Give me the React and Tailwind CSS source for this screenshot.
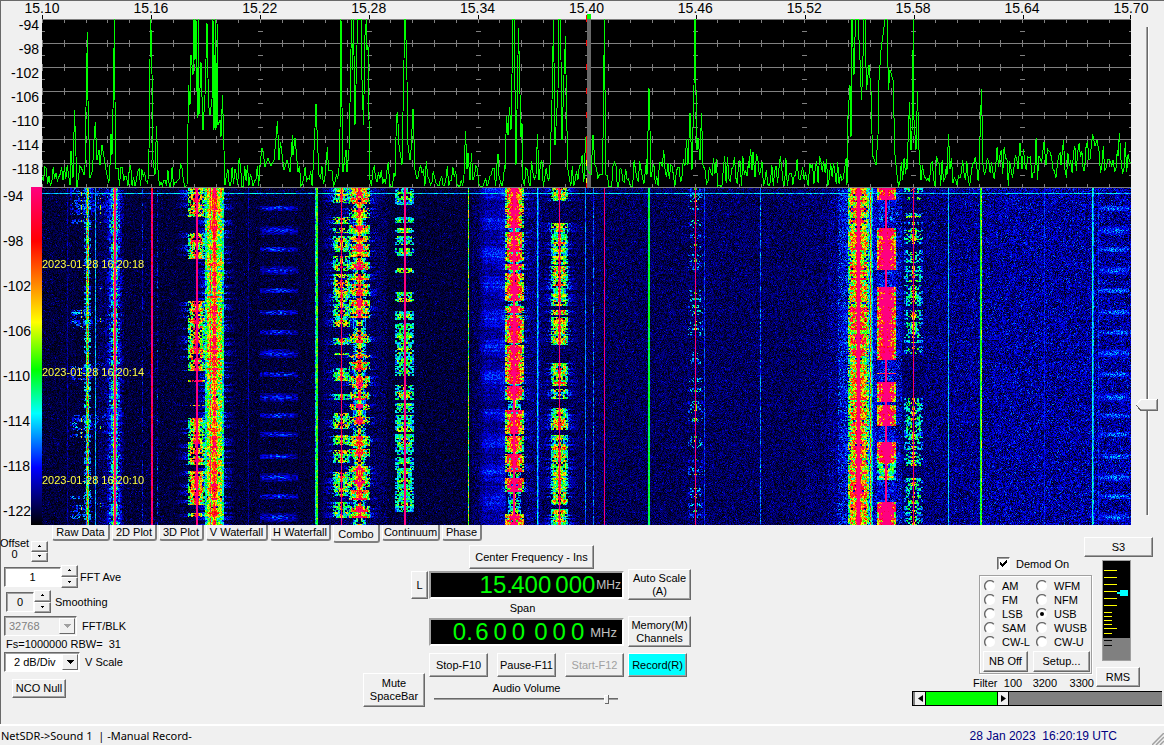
import React, { useLayoutEffect, useRef, useState } from 'react';
import clsx from 'clsx';

const PLOT_W = 1089;
const FALL_H = 337;

const FREQS = ['15.10', '15.16', '15.22', '15.28', '15.34', '15.40', '15.46', '15.52', '15.58', '15.64', '15.70'];
const SPECTRUM_DB = ['-94', '-98', '-102', '-106', '-110', '-114', '-118'];
const FALL_DB = ['-94', '-98', '-102', '-106', '-110', '-114', '-118', '-122'];
const TABS = [
  { name: 'Raw Data', width: 'w-[58px]' },
  { name: '2D Plot', width: 'w-[45px]' },
  { name: '3D Plot', width: 'w-[45px]' },
  { name: 'V Waterfall', width: 'w-[62px]' },
  { name: 'H Waterfall', width: 'w-[61px]' },
  { name: 'Combo', width: 'w-[47px]' },
  { name: 'Continuum', width: 'w-[58px]' },
  { name: 'Phase', width: 'w-[40px]' },
];
const MODES = ['AM', 'WFM', 'FM', 'NFM', 'LSB', 'USB', 'SAM', 'WUSB', 'CW-L', 'CW-U'];

// Repeatable pseudo random value in 0..1
const rnd = (a, b = 0, c = 0) => {
  let h = Math.imul(a + 101, 374761393) ^ Math.imul(b + 57, 668265263) ^ Math.imul(c + 11, 2147483647);
  h = Math.imul(h ^ (h >>> 13), 1274126177);
  h = Math.imul(h ^ (h >>> 15), 2246822519);
  return ((h ^ (h >>> 16)) >>> 0) / 4294967296;
};

// Signal peaks, one list of x,y pairs per carrier
const PEAKS = [
  [28, 151, 29, 132, 31, 159, 32.5, 91, 35, 168],
  [43, 146, 44, 88, 45.4, 13, 46, 81, 48, 159],
  [51, 141, 52, 121, 53.3, 103, 55, 141, 57, 131, 58, 146, 60, 126, 62, 138, 64, 151],
  [68, 146, 69, 115, 70, 136, 71.5, 67, 72.4, 0, 73, 81, 74, 149, 76, 149],
  [106, 161, 107, 131, 108, 41, 108.4, 0, 109.6, 21, 110.5, 96, 111, 141, 113, 156, 114.5, 107, 116, 151],
  [145, 166, 146, 106, 146.6, 66, 148, 86, 149, 36, 151, 56, 152, 0, 153, 41, 154, 0, 155.4, 99, 156.6, 0, 157, 96, 159, 43, 161, 111, 163, 76, 165, 4, 166.5, 86, 168, 96, 170, 81, 171, 0, 172, 111, 173.5, 0, 174, 111, 175.6, 5, 176, 106, 178, 101, 179, 118, 180.5, 76, 182, 131, 183, 166],
  [218, 146, 220, 129, 221, 132, 223, 148, 226, 139, 229, 147, 232, 141, 235.5, 102, 237, 141, 238.5, 123, 242, 151, 245, 141, 248, 153, 250.5, 116, 251, 136, 253, 119, 256, 153],
  [271, 151, 272.5, 121, 274, 85, 275, 111, 277, 156],
  [284, 146, 285.4, 128, 286.5, 151, 290, 152],
  [297, 149, 298, 111, 299, 0, 300.5, 131, 301, 153, 304, 131, 305, 153, 307, 131, 308.5, 61, 309.5, 0, 310.5, 51, 311.5, 0, 313, 106, 315, 26, 316, 0, 319, 0, 320, 61, 321.5, 106, 323, 16, 324.5, 0, 325, 31, 326, 26, 327, 101, 328, 161],
  [353, 158, 354.5, 98, 355.5, 93, 357, 126, 360, 146, 362, 41, 362.5, 0, 363.5, 0, 365, 61, 366, 126, 368, 141, 369, 131, 371, 90, 373, 151],
  [422, 156, 423.5, 112, 425, 150, 426, 134, 428, 161, 429.5, 134, 431, 161],
  [455, 145, 456, 135, 457, 157],
  [463, 151, 464.5, 97, 466, 116, 467.5, 88, 469, 111, 471, 0, 472.5, 0, 473, 71, 474, 146, 476.5, 9, 479, 118, 480, 104, 481, 161],
  [494, 156, 495.5, 115, 497, 161],
  [508, 146, 510, 81, 511.5, 1, 513, 126, 516, 71, 517, 0, 518, 0, 519, 41, 520, 121, 522, 56, 523.5, 17, 524.5, 91, 526, 151],
  [542, 161, 543.6, 118, 545, 151, 549, 156, 551, 116, 553, 146],
  [560, 156, 561.5, 101, 562.3, 0, 563, 71, 564, 156],
  [605, 156, 607, 69, 608, 111, 609, 158],
  [643, 146, 644.5, 120, 646, 146, 648, 94, 650, 151, 652, 66, 652.7, 0, 653.3, 0, 654, 71, 655, 131, 656, 119, 658, 141, 659.5, 94, 661, 146, 663, 151],
  [707, 149, 708.6, 130, 710, 151, 711, 133, 713, 158],
  [805, 166, 806, 96, 808, 66, 809, 118, 810, 0, 812, 56, 813.5, 0, 816, 0, 818, 41, 819.5, 81, 820.5, 56, 822, 0, 823, 0, 824.5, 71, 827, 46, 829, 71, 830.5, 136, 834, 146, 836, 116, 837, 61, 839, 31, 843, 1, 845, 0, 846.5, 71, 848, 51, 851, 61, 853, 136, 855, 156],
  [865, 151, 867.5, 83, 869, 131, 870, 113, 871.4, 0, 872, 101, 874, 131, 875.5, 72, 877, 131, 879, 161],
  [905, 156, 906.5, 115, 908, 150],
  [937, 151, 939.5, 70, 941, 146],
  [976, 150, 978, 124, 980, 150],
  [1000, 140, 1002, 123, 1004, 146],
  [1019, 146, 1021.5, 121, 1023, 151],
  [1048, 140, 1050.5, 115, 1053, 127, 1055, 121, 1057, 132],
  [1076, 137, 1077.5, 114, 1079, 141],
];

const buildTrace = () => {
  const pts = [];
  let x = 0;
  let n = 0;
  const noiseTo = (end) => {
    while (x < end) {
      n += 1;
      const floor = x < 620 ? 174 : x < 935 ? 171 : 161 - (x - 935) * 0.08;
      const swing = x < 480 ? 28 : 34;
      let y = floor - rnd(n, 3) * swing;
      if (rnd(n, 9) > 0.9) y -= 13 * rnd(n, 5);
      if (x > 935) y += 6 + (rnd(n, 7) - 0.4) * 10;
      pts.push([x, Math.min(167, Math.round(y))]);
      x += 1.4;
    }
  };
  PEAKS.forEach((p) => {
    noiseTo(p[0]);
    for (let i = 0; i < p.length; i += 2) pts.push([p[i], p[i + 1]]);
    x = p[p.length - 2] + 1.5;
  });
  noiseTo(PLOT_W);
  return pts.map(([px, py]) => `${px.toFixed(1)},${py + 5}`).join(' ');
};
const TRACE = buildTrace();

// level -> colour, black at the bottom of the scale and magenta at the top
const PALETTE = [
  [0, 0, 0, 0], [0.17, 0, 0, 255], [0.33, 0, 255, 255], [0.46, 0, 255, 0],
  [0.6, 255, 255, 0], [0.72, 255, 128, 0], [0.84, 255, 0, 0], [1, 255, 0, 128],
];
const colour = (v) => {
  if (v <= 0) return [0, 0, 8];
  if (v >= 1) return [255, 0, 128];
  let i = 1;
  while (PALETTE[i][0] < v) i += 1;
  const a = PALETTE[i - 1];
  const b = PALETTE[i];
  const t = (v - a[0]) / (b[0] - a[0]);
  return [1, 2, 3].map((k) => a[k] + (b[k] - a[k]) * t);
};

// Steady carriers: x, width, level, flutter
const LINES = [
  [44, 1, 0.34, 0.3], [45, 1, 0.62, 0.5], [46, 1, 0.4, 0.3], [53, 1, 0.27, 0.12], [71, 1, 0.4, 0.5], [72, 2, 1.1, 0],
  [74, 1, 0.36, 0.4], [109, 2, 1, 0.3], [110, 1, 0.7, 0.5],
  [154, 2, 1.1, 0], [273, 1, 0.3, 0.2], [274, 2, 0.46, 0.14], [299, 1, 0.98, 0.2], [362, 2, 1.1, 0],
  [426, 1, 0.48, 0.3], [471, 2, 1.1, 0], [495, 1, 0.3, 0.12], [496, 1, 0.2, 0.1], [517, 1, 1, 0.1],
  [543, 1, 0.24, 0.1], [551, 1, 0.2, 0.16], [562, 1, 1.02, 0.15], [606, 2, 0.43, 0.05],
  [653, 1, 0.98, 0.1], [662, 1, 0.19, 0.12], [718, 1, 0.22, 0.16], [815, 3, 1.1, 0],
  [828, 2, 0.38, 0.16], [843, 2, 1.1, 0], [871, 1, 0.98, 0.1], [906, 1, 0.3, 0.1],
  [938, 1, 0.43, 0.1], [939, 1, 0.52, 0.16], [1002, 1, 0.16, 0.12], [1050, 1, 0.33, 0.1], [1051, 1, 0.25, 0.14],
  [1056, 1, 0.17, 0.14], [25, 1, 0.1, 0.1], [206, 1, 0.1, 0.1], [100, 1, 0.1, 0.2], [115, 1, 0.1, 0.25],
];

const ALL = [[0, 337]];
// Modulated stations: centre, half width, level, how full the sidebands are, core half width, keyed-on rows
const STATIONS = [
  { c: 39, hw: 11, lv: 0.27, fill: 0.55, core: 0, on: [[0, 27], [31, 36], [122, 140], [177, 192], [227, 250], [308, 311], [317, 331]] },
  { c: 58, hw: 9, lv: 0.23, fill: 0.45, core: 0, on: [[0, 27], [32, 35], [98, 101], [130, 136], [175, 184], [226, 244], [315, 319]] },
  { c: 45, hw: 3, lv: 0.4, fill: 0.6, core: 0, on: ALL },
  { c: 72, hw: 9, lv: 0.17, fill: 0.6, core: 1, on: ALL },
  { c: 72, hw: 5, lv: 0.34, fill: 0.7, core: 1, on: ALL },
  { c: 109, hw: 8, lv: 0.18, fill: 0.22, core: 0, on: ALL },
  { c: 154, hw: 8, lv: 0.66, fill: 0.85, core: 2, on: [[0, 29], [45, 71], [113, 183], [192, 194], [217, 218], [230, 277], [283, 317], [325, 329]] },
  { c: 172, hw: 9, lv: 0.56, fill: 0.99, core: 2, on: ALL },
  { c: 168, hw: 2, lv: 0.7, fill: 0.8, core: 0, on: ALL },
  { c: 299, hw: 8, lv: 0.52, fill: 0.8, core: 1, on: [[0, 15], [29, 36], [40, 45], [48, 64], [68, 83], [86, 139], [150, 157], [165, 167], [180, 193], [206, 212], [225, 241], [247, 257], [262, 275], [284, 309], [314, 330]] },
  { c: 317, hw: 10, lv: 0.66, fill: 0.85, core: 3, on: [[0, 16], [20, 30], [37, 46], [48, 54], [56, 69], [74, 82], [86, 92], [96, 108], [112, 130], [146, 155], [167, 170], [174, 182], [188, 200], [204, 212], [216, 222], [229, 237], [248, 258], [261, 269], [278, 299], [302, 312], [318, 330]] },
  { c: 317, hw: 6, lv: 0.42, fill: 0.8, core: 2, on: ALL },
  { c: 362, hw: 9, lv: 0.46, fill: 0.82, core: 0, on: [[0, 17], [29, 35], [40, 45], [48, 57], [60, 68], [80, 85], [104, 114], [123, 132], [135, 188], [197, 212], [215, 225], [227, 244], [246, 267], [269, 324]] },
  { c: 472, hw: 9, lv: 0.8, fill: 0.97, core: 4, on: [[0, 40], [44, 74], [76, 82], [85, 113], [118, 125], [127, 155], [157, 196], [198, 212], [222, 246], [248, 264], [266, 284], [290, 304], [326, 337]] },
  { c: 472, hw: 6, lv: 0.4, fill: 0.8, core: 1, on: ALL },
  { c: 517, hw: 8, lv: 0.56, fill: 0.9, core: 1, on: [[0, 13], [35, 77], [78, 118], [122, 127], [129, 157], [175, 198], [201, 211], [220, 242], [247, 277], [277, 317], [321, 337]] },
  { c: 653, hw: 7, lv: 0.34, fill: 0.5, core: 1, on: [[0, 14], [18, 22], [32, 40], [45, 52], [55, 60], [66, 82], [102, 114], [117, 128], [133, 142], [144, 148], [164, 177], [190, 195], [200, 208], [213, 225], [230, 234], [248, 260], [271, 275], [278, 287], [300, 310], [315, 330]] },
  { c: 816, hw: 10, lv: 0.7, fill: 0.96, core: 2, on: ALL },
  { c: 828, hw: 2, lv: 0.42, fill: 0.95, core: 0, on: ALL },
  { c: 844, hw: 9, lv: 1, fill: 1, core: 4, on: [[0, 12], [40, 82], [99, 172], [185, 186], [194, 214], [217, 238], [254, 275], [314, 337]] },
  { c: 844, hw: 9, lv: 0.5, fill: 0.9, core: 2, on: [[275, 292]] },
  { c: 844, hw: 9, lv: 0.22, fill: 0.6, core: 0, on: ALL },
  { c: 871, hw: 9, lv: 0.42, fill: 0.62, core: 2, on: [[0, 5], [9, 12], [25, 30], [34, 37], [40, 56], [62, 75], [78, 94], [97, 118], [122, 132], [134, 150], [152, 155], [158, 166], [210, 262], [264, 278], [290, 337]] },
];
const STRIPES = [20, 42, 61, 82, 102, 124, 144, 165, 186, 209, 227, 246, 268, 289, 308, 329];

const isOn = (rows, y) => rows.some(([a, b]) => y >= a && y < b);

const drawWaterfall = (ctx) => {
  const img = ctx.createImageData(PLOT_W, FALL_H);
  const level = new Float32Array(PLOT_W * FALL_H);
  for (let y = 0; y < FALL_H; y += 1) {
    for (let x = 0; x < PLOT_W; x += 1) {
      let base = x < 430 ? 0.042 : x < 640 ? 0.062 : x < 760 ? 0.066 : 0.074;
      if (x > 880) base = 0.085 + Math.min(0.025, (x - 880) * 0.0003);
      // skirts of the strong stations
      if (x > 280 && x < 345) base += 0.02;
      if (x > 55 && x < 80) base += 0.02;
      if (x > 795 && x < 860) base += 0.05;
      if (x > 785 && x < 805) base += 0.02;
      if (x > 483 && x < 500) base += 0.02;
      const r = rnd(x, y, 1);
      let v = base * (0.05 + r * 1.75);
      if (r > 0.96) v += 0.07 * rnd(x, y, 2);
      level[y * PLOT_W + x] = v;
    }
  }
  const put = (x, y, v) => {
    if (x < 0 || x >= PLOT_W || v <= 0) return;
    const i = y * PLOT_W + x;
    level[i] = Math.max(level[i], v);
  };
  for (let y = 0; y < FALL_H; y += 1) {
    // haze left of 15.36
    const swell = Math.sin(((y + 4) / 31) * Math.PI * 2) * 0.045 + (rnd(y >> 1, 3, 3) - 0.5) * 0.06;
    const quiet = y > 212 && y < 221;
    for (let x = 437; x < 464; x += 1) {
      const edge = Math.min(1, (x - 434) / 9);
      put(x, y, (quiet ? 0.05 : 0.11 + swell) * edge + (rnd(x, y, 4) - 0.4) * 0.13);
    }
    // interference pulses, once per sweep
    STRIPES.forEach((s, si) => {
      const d = Math.abs(y - s);
      const lim = si % 6 === 1 || si % 6 === 3 ? 4 : 2;
      if (d > lim) return;
      for (let x = 218; x < 256; x += 1) put(x, y, (0.19 - Math.abs(x - 236) * 0.004) * (0.3 + rnd(x >> 1, y, 6) * 1.1) * (1.15 - d / 7));
      for (let x = 1056; x < 1087; x += 1) put(x, y, (0.24 - Math.abs(x - 1074) * 0.004) * (0.3 + rnd(x, y, 6) * 1.1) * (1.15 - d / 7));
    });
    STATIONS.forEach((s, si) => {
      if (!isOn(s.on, y)) return;
      const rowLevel = 0.68 + rnd(y >> 1, si, 8) * 0.35 + rnd(Math.floor(y / 7), si, 9) * 0.25;
      const hw = s.fill > 0.98 ? s.hw : s.hw - (rnd(y, si, 12) > 0.85 ? 2 : 0);
      for (let d = -hw; d <= hw; d += 1) {
        const m = Math.abs(d);
        const twin = rnd(m >> 1, y >> 1, si + 20);
        const own = rnd(s.c + d, y, si + 40);
        if ((twin + own) / 2 > s.fill * 0.9 + 0.1 || rnd(m >> 1, y >> 1, si + 70) > s.fill) continue;
        let v = s.lv * rowLevel * (0.42 + twin * 0.65 + own * 0.45);
        if (m <= s.core) v += 0.32 * (1 - m / (s.core + 1)) + 0.06;
        if (m >= hw - 1) v *= 0.7;
        put(s.c + d, y, v);
      }
      // splatter outside the channel
      if (s.lv > 0.5 && rnd(y >> 1, si, 90) > 0.5) {
        for (let d = s.hw + 1; d < s.hw + 13; d += 1) {
          const v = 0.3 * (1 - (d - s.hw) / 15) * rnd(s.c + d, y, 91);
          put(s.c + d, y, v);
          put(s.c - d, y, v);
        }
      }
    });
    LINES.forEach(([x, w, lv, flutter], li) => {
      for (let k = 0; k < w; k += 1) {
        put(x + k, y, lv + (rnd(y >> 1, li, 30) - 0.5) * flutter + (rnd(y, k, li) - 0.5) * flutter * 0.6);
      }
    });
  }
  for (let x = 0; x < PLOT_W; x += 1) put(x, 5, 0.24 + rnd(x >> 1, 5, 99) * 0.12);
  for (let i = 0; i < level.length; i += 1) {
    const [r, g, b] = colour(level[i]);
    img.data[i * 4] = r;
    img.data[i * 4 + 1] = g;
    img.data[i * 4 + 2] = b;
    img.data[i * 4 + 3] = 255;
  }
  ctx.putImageData(img, 0, 0);
};

const Button = ({ className, children, ...props }) => (
  <button
    type="button"
    className={clsx(
      'flex items-center justify-center border border-t-white border-l-white border-r-[#696969] border-b-[#696969] text-center leading-[13px] whitespace-nowrap shadow-[inset_-1px_-1px_0_#a0a0a0]',
      className
    )}
    {...props}
  >
    {children}
  </button>
);

const Spinner = ({ label, onStep, className }) => (
  <div className={clsx('flex w-[17px] flex-col', className)}>
    <Button className="flex-1" aria-label={`${label} up`} onClick={() => onStep(1)}>
      <svg width="5" height="3" shapeRendering="crispEdges"><path d="M2 0h1v1h1v1H1V1h1z" /></svg>
    </Button>
    <Button className="flex-1" aria-label={`${label} down`} onClick={() => onStep(-1)}>
      <svg width="5" height="3" shapeRendering="crispEdges"><path d="M1 0h3v1H3v1H2V1H1z" /></svg>
    </Button>
  </div>
);

const sunken = 'border border-t-[#696969] border-l-[#696969] border-r-white border-b-white shadow-[inset_1px_1px_0_#a0a0a0]';

const Select = ({ id, options, disabled, className }) => (
  <div className={clsx('relative', className)}>
    <select
      id={id}
      disabled={disabled}
      className={clsx('h-full w-full appearance-none pr-[18px]', sunken, disabled ? 'bg-[#f0f0f0] pl-[4px] text-[#808080]' : 'bg-white pl-[9px]')}
    >
      {options.map((o) => <option key={o}>{o}</option>)}
    </select>
    <span className="pointer-events-none absolute top-[2px] right-[2px] bottom-[2px] flex w-[16px] items-center justify-center border border-t-white border-l-white border-r-[#696969] border-b-[#696969] bg-[#f0f0f0]">
      <svg width="7" height="4" shapeRendering="crispEdges"><path d="M0 0h7v1H6v1H5v1H4v1H3V3H2V2H1V1H0z" fill={disabled ? '#a0a0a0' : '#000'} /></svg>
    </span>
  </div>
);

const Spectrum = () => {
  const cols = Array.from({ length: 51 }, (_, i) => i);
  return (
    <svg viewBox="0 0 1089 174" preserveAspectRatio="none" className="block h-[174px] w-full" shapeRendering="crispEdges">
      <rect y="5" width="1089" height="168" fill="#000" />
      <g stroke="#808080">
        {[0, 1, 2, 3, 4, 5, 6, 7].map((i) => <path key={i} d={`M0 ${i * 24 + 5.5}H1089`} />)}
        {cols.map((i) => (
          <path
            key={i}
            d={[0, 1, 2, 3, 4, 5, 6, 7]
              .map((r) => `M${Math.round(i * 21.78) + 0.5} ${r === 0 ? 6 : r * 24 + 2}v${r === 0 ? 3 : r === 7 ? 4 : 7}`)
              .join('')}
          />
        ))}
        {cols.filter((i) => i % 5 === 0).map((i) => (
          <path key={i} d={[0, 1, 2, 3, 4, 5, 6].map((r) => `M${Math.round(i * 21.78) - 2} ${r * 24 + 17.5}h5`).join('')} />
        ))}
      </g>
      {FREQS.map((f, i) => <path key={f} d={`M${Math.min(i * 109, 1088) + 0.5} 1v4`} stroke="#000" />)}
      <rect x="545" y="5" width="4" height="168" fill="#696969" />
      <polyline points={TRACE} fill="none" stroke="#00ff00" />
      <rect x="545" y="0" width="4" height="5" fill="#00ff00" />
      <path d="M544.5 1v4" stroke="#ff0000" />
      <path d="M544.5 5v3M544.5 26v6M544.5 50v6M544.5 74v6M544.5 98v6M544.5 122v24M544.5 168v6" stroke="#ff0000" />
      <path d="M544.5 146v6M544.5 164v5" stroke="#ffff00" />
    </svg>
  );
};

const Waterfall = () => {
  const canvas = useRef(null);
  useLayoutEffect(() => {
    drawWaterfall(canvas.current.getContext('2d'));
  }, []);
  return (
    <div className="relative">
      <canvas ref={canvas} width={PLOT_W} height={FALL_H} className="block h-[337px] w-full" />
      <div className="absolute top-[69px] left-0 flex flex-col gap-[94px] text-[11px] leading-[14px] text-[#ffff40]">
        <span>2023-01-28 16:20:18</span>
        <span>2023-01-28 16:20:14</span>
        <span>2023-01-28 16:20:10</span>
      </div>
    </div>
  );
};

const LeftControls = () => {
  const [offset, setOffset] = useState(0);
  const [ave, setAve] = useState(1);
  const [smooth, setSmooth] = useState(0);
  return (
    <div className="-mt-[3px] flex w-[142px] flex-col items-start">
      <div className="flex items-end">
        <div className="w-[31px] pb-[2px] pr-[2px] text-center leading-[11px]">Offset<br />{offset}</div>
        <Spinner label="Offset" className="h-[21px]" onStep={(d) => setOffset(offset + d)} />
      </div>
      <div className="mt-[3px] ml-[4px] flex items-center">
        <input id="ave" value={ave} onChange={(e) => setAve(e.target.value)} className={clsx('h-[20px] w-[57px] bg-white text-center', sunken)} />
        <Spinner label="FFT Ave" className="h-[23px]" onStep={(d) => setAve(Number(ave) + d)} />
        <label htmlFor="ave" className="ml-[2px]">FFT Ave</label>
      </div>
      <div className="mt-[2px] ml-[6px] flex items-center">
        <input id="smooth" value={smooth} onChange={(e) => setSmooth(e.target.value)} className={clsx('h-[20px] w-[28px] bg-[#f0f0f0] text-center', sunken)} />
        <Spinner label="Smoothing" className="h-[23px]" onStep={(d) => setSmooth(Number(smooth) + d)} />
        <label htmlFor="smooth" className="ml-[4px]">Smoothing</label>
      </div>
      <div className="mt-[3px] ml-[4px] flex items-center">
        <Select id="blk" options={['32768']} disabled className="h-[20px] w-[73px]" />
        <label htmlFor="blk" className="ml-[5px]">FFT/BLK</label>
      </div>
      <div className="mt-px ml-[6px] leading-[14px] whitespace-pre">{'Fs=1000000 RBW=  31'}</div>
      <div className="mt-px ml-[4px] flex items-center">
        <Select id="vscale" options={['2 dB/Div']} className="h-[20px] w-[76px]" />
        <label htmlFor="vscale" className="ml-[5px]">V Scale</label>
      </div>
      <Button className="mt-[7px] ml-[12px] h-[19px] w-[54px]">NCO Null</Button>
    </div>
  );
};

const CenterControls = () => {
  const [volume, setVolume] = useState(93);
  return (
    <div className="flex w-[328px] gap-x-[4px] pt-[4px]">
      <div className="flex w-[62px] flex-col items-end">
        <Button className="mt-[26px] mr-[-3px] h-[28px] w-[17px]">L</Button>
        <Button className="mt-[74px] h-[34px] w-full">Mute<br />SpaceBar</Button>
      </div>
      <div className="flex w-[195px] flex-col">
        <Button className="ml-[40px] h-[24px] w-[125px]">Center Frequency - Ins</Button>
        <div className="mt-[2px] flex h-[28px] items-center justify-end border-2 border-t-[#a0a0a0] border-l-[#a0a0a0] border-r-white border-b-white bg-black text-[24px] leading-none text-[#00ff00]">
          <span>15</span>
          <span className="w-[5px] overflow-visible">.</span>
          <span>400</span>
          <span className="ml-[4px]">000</span>
          <span className="mr-px ml-px text-[12px] text-[#c0c0c0]">MHz</span>
        </div>
        <div className="my-[3px] ml-[-8px] text-center leading-[13px]">Span</div>
        <div className="flex h-[28px] items-center justify-end border-2 border-t-[#a0a0a0] border-l-[#a0a0a0] border-r-white border-b-white bg-black text-[24px] leading-none text-[#00ff00]">
          <span>0</span>
          <span className="w-[9px]">.</span>
          <span className="flex gap-[5px]"><i className="not-italic">6</i><i className="not-italic">0</i><i className="not-italic">0</i></span>
          <span className="ml-[9px] flex gap-[5px]"><i className="not-italic">0</i><i className="not-italic">0</i><i className="not-italic">0</i></span>
          <span className="mr-[5px] ml-[6px] text-[13px] text-[#c0c0c0]">MHz</span>
        </div>
        <div className="mt-[7px] flex justify-between">
          <Button className="h-[24px] w-[59px]">Stop-F10</Button>
          <Button className="h-[24px] w-[59px]">Pause-F11</Button>
          <Button className="h-[24px] w-[59px] text-[#a0a0a0]" disabled>Start-F12</Button>
        </div>
        <label htmlFor="volume" className="mt-[4px] text-center leading-[14px]">Audio Volume</label>
        <div className="relative mx-[5px] h-[10px]">
          <svg viewBox="0 0 185 10" preserveAspectRatio="none" className="block h-[10px] w-full" shapeRendering="crispEdges">
            <path d="M0 3.5h184" stroke="#696969" />
            <path d="M0 4.5h184" stroke="#a0a0a0" />
            <path d="M170 0h5v9h-3l-2-2z" fill="#f0f0f0" />
            <path d="M170.5 0v7M170 .5h5" stroke="#fff" />
            <path d="M174.5 0v9M171 8.5h4" stroke="#696969" />
          </svg>
          <input id="volume" type="range" value={volume} onChange={(e) => setVolume(e.target.value)} className="absolute inset-0 h-full w-full opacity-0" />
        </div>
      </div>
      <div className="flex w-[63px] flex-col pt-[24px]">
        <Button className="h-[31px]">Auto Scale<br />(A)</Button>
        <Button className="mt-[16px] h-[31px]">Memory(M)<br />Channels</Button>
        <Button className="mt-[6px] h-[24px] w-[59px] bg-[#00ffff]">Record(R)</Button>
      </div>
    </div>
  );
};

const Meter = () => (
  <svg width="29" height="101" className="ml-[6px] block" shapeRendering="crispEdges">
    <rect width="29" height="101" fill="#a0a0a0" />
    <rect x="1" y="1" width="27" height="77" fill="#000" />
    <rect x="1" y="78" width="27" height="22" fill="#808080" />
    <path d="M2 10.5h13M2 17.5h13M2 24.5h13M2 31.5h13M2 38.5h13M2 45.5h13M2 52.5h8M2 56.5h8M2 60.5h8M2 64.5h8M2 68.5h13M2 73.5h8" stroke="#ffff00" />
    <path d="M2 80.5h8M2 85.5h8" stroke="#000" />
    <path d="M15 32h3v-2h8v6h-8v-2h-3z" fill="#00ffff" />
  </svg>
);

const DemodControls = () => {
  const [mode, setMode] = useState('USB');
  const [demod, setDemod] = useState(true);
  return (
    <div className="w-[252px]">
      <div className="flex justify-end pr-[11px]">
        <Button className="-mt-[4px] h-[20px] w-[69px]">S3</Button>
      </div>
      <div className="flex h-[134px] justify-end pr-[24px]">
        <div className="w-[123px]">
          <label className="ml-[24px] flex h-[13px] items-center gap-[6px]">
            <input type="checkbox" checked={demod} onChange={() => setDemod(!demod)} className="peer sr-only" />
            <span className={clsx('flex h-[13px] w-[13px] items-center justify-center bg-white', sunken)}>
              {demod && <svg width="7" height="7" shapeRendering="crispEdges"><path d="M0 2h1v1h1v1h1V3h1V2h1V1h1V0h1v3H6v1H5v1H4v1H3v1H2V6H1V5H0z" /></svg>}
            </span>
            Demod On
          </label>
          <div className="mt-[5px] ml-[6px] h-[99px] w-[113px] border border-[#a0a0a0] px-[4px] pt-[3px] shadow-[inset_1px_1px_0_#fff,1px_1px_0_#fff]">
            <div className="grid grid-cols-[52px_1fr] leading-[14px]">
              {MODES.map((m) => (
                <label key={m} className="flex h-[14px] items-center gap-[6px] whitespace-nowrap">
                  <input type="radio" name="mode" checked={mode === m} onChange={() => setMode(m)} className="sr-only" />
                  <svg width="12" height="12" viewBox="0 0 12 12" className="shrink-0">
                    <circle cx="6" cy="6" r="5" fill="#fff" />
                    <path d="M2.2 9.8A5.3 5.3 0 0 1 9.8 2.2" fill="none" stroke="#696969" strokeWidth="1.4" />
                    {mode === m && <circle cx="6" cy="6" r="2" />}
                  </svg>
                  {m}
                </label>
              ))}
            </div>
            <div className="mx-[-3px] mt-[2px] flex justify-between pl-[2px]">
              <Button className="h-[21px] w-[45px]">NB Off</Button>
              <Button className="h-[21px] w-[57px]">Setup...</Button>
            </div>
          </div>
          <div className="mt-[3px] flex w-[121px] justify-between leading-[13px]">
            <span>Filter</span>
            <span>100</span>
            <span className="ml-[4px]">3200</span>
            <span className="ml-[6px]">3300</span>
          </div>
        </div>
        <div className="w-[44px] pt-[3px]">
          <Meter />
          <Button className="mt-[6px] h-[20px] w-full">RMS</Button>
        </div>
      </div>
      <div className="mr-[2px] flex h-[15px] border-y border-l border-black bg-[#808080] pl-[2px]">
        <button type="button" aria-label="Low cut" className="flex w-[10px] items-center justify-center bg-[#f0f0f0]">
          <svg width="5" height="7"><path d="M5 0v7L0 3.500z" /></svg>
        </button>
        <div className="w-[73px] border-x border-black bg-[#00ff00]" />
        <button type="button" aria-label="High cut" className="flex w-[10px] items-center justify-center bg-[#f0f0f0]">
          <svg width="5" height="7"><path d="M0 0v7l5-3.500z" /></svg>
        </button>
        <div className="w-px bg-black" />
      </div>
    </div>
  );
};

const App = () => {
  const [tab, setTab] = useState('Combo');
  const [zoom, setZoom] = useState(23);

  return (
    <div className="w-full overflow-hidden border-b border-black bg-[#f0f0f0] font-['Liberation_Sans',Arial,sans-serif] text-[11px] leading-[14px] text-black">
      <div className="border-t border-l border-[#696969]">
        {/* Spectrum and waterfall */}
        <div className="flex">
          <div className="flex w-[41px] shrink-0 flex-col pt-[12px] text-[14px]">
            {SPECTRUM_DB.map((db) => <div key={db} className="h-[24px] pr-[3px] text-right leading-[24px]">{db}</div>)}
            <div className="mt-[6px] flex h-[338px]">
              <div className="flex w-[30px] flex-col justify-between pb-[5px] pl-[2px]">
                {FALL_DB.map((db) => <div key={db} className="leading-[18px]">{db}</div>)}
              </div>
              <div className="w-[11px] bg-[linear-gradient(to_bottom,#ff0080_0%,#ff0000_16%,#ff8000_28%,#ffff00_40%,#00ff00_54%,#00ffff_67%,#0000ff_83%,#000000_100%)]" />
            </div>
          </div>
          <div className="min-w-0 flex-1">
            <div className="flex h-[13px] justify-between text-[14px] leading-[14px]">
              {FREQS.map((f) => <span key={f} className="flex w-0 justify-center">{f}</span>)}
            </div>
            <Spectrum />
            <Waterfall />
          </div>
          <div className="relative w-[33px] shrink-0 pt-[26px]">
            <svg width="33" height="490" shapeRendering="crispEdges" className="block">
              <path d="M16.500 0v488" stroke="#696969" />
              <path d="M15.500 0v488" stroke="#a0a0a0" />
              <path d="M17.500 0v489" stroke="#fff" />
              <path d="M5 378l5-6h17v12H10z" fill="#f0f0f0" />
              <path d="M5 378l5-5.500h17" fill="none" stroke="#fff" />
              <path d="M26.500 372v12M5 378l5 5.500h17" fill="none" stroke="#696969" />
              <path d="M25.500 373v10M10 382.500h16" fill="none" stroke="#a0a0a0" />
            </svg>
            <input
              type="range"
              aria-label="Zoom"
              value={zoom}
              onChange={(e) => setZoom(e.target.value)}
              className="absolute inset-0 h-full w-full opacity-0 [writing-mode:vertical-lr]"
            />
          </div>
        </div>

        {/* View tabs */}
        <div className="flex h-[16px] items-start gap-[2px] pl-[51px]">
          {TABS.map((t) => (
            <button
              key={t.name}
              type="button"
              onClick={() => setTab(t.name)}
              className={clsx(
                'shrink-0 rounded-b-[3px] border-r-2 border-b-2 border-l border-r-[#808080] border-b-[#808080] border-l-white whitespace-nowrap',
                t.width,
                tab === t.name ? 'h-[18px] pt-[2px] leading-[14px]' : 'h-[16px] leading-[14px]'
              )}
            >
              {t.name}
            </button>
          ))}
        </div>

        {/* Controls */}
        <div className="-ml-px flex items-start justify-between pb-[17px]">
          <LeftControls />
          <CenterControls />
          <DemodControls />
        </div>
      </div>

      {/* Status bar */}
      <div className="flex h-[21px] items-center justify-between border-t-2 border-white pl-px">
        <span className="font-['Noto_Sans','Open_Sans',sans-serif] text-[11px] whitespace-pre">{'NetSDR->Sound 1  | -Manual Record-'}</span>
        <div className="flex h-full items-center">
          <span className="mr-[35px] text-[12px] whitespace-pre text-[#000080]">{'28 Jan 2023  16:20:19 UTC'}</span>
          <svg width="12" height="12" className="self-end"><path d="M0 12L12 0M4 12l8-8M8 12l4-4" stroke="#a0a0a0" strokeWidth="1.500" /></svg>
        </div>
      </div>
    </div>
  );
};

export default App;
